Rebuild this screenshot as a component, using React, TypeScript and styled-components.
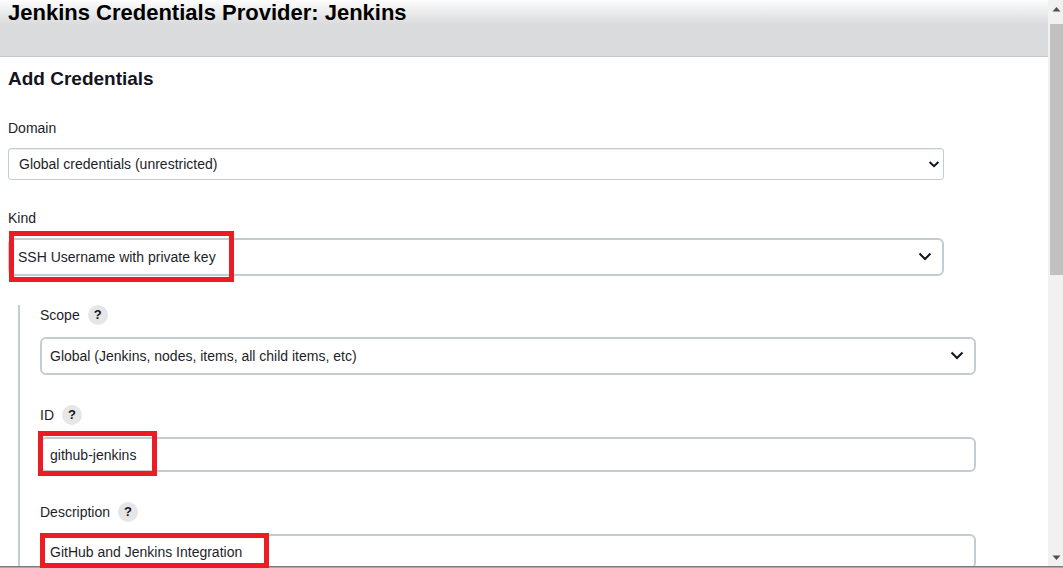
import React from "react";
import styled, { createGlobalStyle } from "styled-components";

const GlobalStyle = createGlobalStyle`
  *, *::before, *::after { box-sizing: border-box; }
  body {
    margin: 0;
    background: #fff;
    color: #1e1e29;
    font: 14px/20px "Liberation Sans", Arial, sans-serif;
  }
`;

const Window = styled.div`
  position: relative;
  display: flex;
  height: 100vh;
  overflow: hidden;
`;

const WindowEdge = styled.div`
  position: absolute;
  inset: auto 0 0;
  z-index: 1;
  height: 2px;
  background: #a8a8a8;
  border-top: 1px solid #7c7c7c;
`;

const Page = styled.main`
  flex: 1;
  min-width: 0;
`;

const Header = styled.header`
  height: 57px;
  padding: 0 8px;
  background: linear-gradient(#fdfdfd, #dadbdd 24px);
  border-bottom: 1px solid #c8c8c8;
`;

const Title = styled.h1`
  margin: 0;
  color: #000;
  font-size: 22px;
  line-height: 26px;
`;

const Form = styled.form`
  padding: 9px 72px 0 8px;
`;

const Heading = styled.h2`
  margin: 0 0 26px;
  color: #14141f;
  font-size: 19px;
  line-height: 26px;
`;

const Fields = styled.div`
  display: flex;
  flex-direction: column;
  gap: 28px;
  margin-right: 32px;
`;

const Group = styled.div`
  display: flex;
  flex-direction: column;
  gap: 30px;
  margin: 29px 0 0 10px;
  padding-left: 20px;
  border-left: 2px solid #c3ccd1;
`;

const Field = styled.div<{ $gap: number }>`
  display: flex;
  flex-direction: column;
  gap: ${(p) => p.$gap}px;
`;

const LabelRow = styled.div`
  display: flex;
  align-items: center;
  gap: 8px;
`;

const Help = styled.button`
  width: 20px;
  height: 20px;
  padding: 0;
  border: 0;
  border-radius: 50%;
  background: #e6e6e6;
  color: #14141f;
  font: bold 13px/20px "Liberation Sans", Arial, sans-serif;
`;

const Control = styled.div`
  position: relative;
  display: flex;
`;

const Select = styled.select<{ $compact?: boolean }>`
  appearance: none;
  width: 100%;
  height: ${(p) => (p.$compact ? 32 : 38)}px;
  padding: 0 32px 0 ${(p) => (p.$compact ? 10 : 8)}px;
  border: ${(p) => (p.$compact ? 1 : 2)}px solid #c3ccd1;
  border-radius: ${(p) => (p.$compact ? 3 : 6)}px;
  box-shadow: ${(p) => (p.$compact ? "inset 0 1px 1px #e9edef" : "none")};
  background: #fff;
  color: inherit;
  font: inherit;
`;

const Input = styled.input`
  width: 100%;
  height: 35px;
  padding: 0 8px;
  border: 2px solid #c3ccd1;
  border-radius: 6px;
  background: #fff;
  color: inherit;
  font: inherit;
`;

const Chevron = styled.svg<{ $compact?: boolean }>`
  position: absolute;
  top: 50%;
  right: ${(p) => (p.$compact ? 4 : 12)}px;
  width: ${(p) => (p.$compact ? 12 : 14)}px;
  height: 10px;
  margin-top: -5px;
  fill: none;
  stroke: #14141f;
  stroke-width: 2;
  pointer-events: none;
`;

const Highlight = styled.span<{ $x: number; $y: number; $w: number; $h: number }>`
  position: absolute;
  z-index: 2;
  left: ${(p) => p.$x}px;
  top: ${(p) => p.$y}px;
  width: ${(p) => p.$w}px;
  height: ${(p) => p.$h}px;
  border: 5px solid #ed1c24;
  pointer-events: none;
`;

const Scrollbar = styled.div`
  display: flex;
  flex-direction: column;
  justify-content: space-between;
  width: 15px;
  padding: 6px 0 7px 2px;
  background: #f1f1f1;
`;

const Arrow = styled.svg`
  width: 13px;
  height: 6px;
  fill: #505050;
`;

const Track = styled.div`
  flex: 1;
  padding: 12px 0;
`;

const Thumb = styled.div`
  height: 48.4%;
  background: #c1c1c1;
`;

function HelpButton({ topic }: { topic: string }) {
  return <Help type="button" aria-label={`Help for ${topic}`}>?</Help>;
}

export default function App() {
  return (
    <>
      <GlobalStyle />
      <Window>
        <Page>
          <Header>
            <Title>Jenkins Credentials Provider: Jenkins</Title>
          </Header>
          <Form>
            <Heading>Add Credentials</Heading>
            <Fields>
              <Field $gap={10}>
                <label htmlFor="domain">Domain</label>
                <Control>
                  <Select id="domain" $compact>
                    <option>Global credentials (unrestricted)</option>
                  </Select>
                  <Chevron $compact viewBox="0 0 12 10"><path d="M1.600 3L6 7.200 10.400 3" /></Chevron>
                </Control>
              </Field>
              <Field $gap={10}>
                <label htmlFor="kind">Kind</label>
                <Control>
                  <Select id="kind">
                    <option>SSH Username with private key</option>
                  </Select>
                  <Chevron viewBox="0 0 14 10"><path d="M1.500 1.500L7 7 12.500 1.500" /></Chevron>
                  <Highlight $x={1} $y={-7} $w={225} $h={51} />
                </Control>
              </Field>
            </Fields>
            <Group>
              <Field $gap={12}>
                <LabelRow>
                  <label htmlFor="scope">Scope</label>
                  <HelpButton topic="Scope" />
                </LabelRow>
                <Control>
                  <Select id="scope">
                    <option>Global (Jenkins, nodes, items, all child items, etc)</option>
                  </Select>
                  <Chevron viewBox="0 0 14 10"><path d="M1.500 1.500L7 7 12.500 1.500" /></Chevron>
                </Control>
              </Field>
              <Field $gap={12}>
                <LabelRow>
                  <label htmlFor="id">ID</label>
                  <HelpButton topic="ID" />
                </LabelRow>
                <Control>
                  <Input id="id" defaultValue="github-jenkins" />
                  <Highlight $x={-2} $y={-6} $w={119} $h={45} />
                </Control>
              </Field>
              <Field $gap={12}>
                <LabelRow>
                  <label htmlFor="description">Description</label>
                  <HelpButton topic="Description" />
                </LabelRow>
                <Control>
                  <Input id="description" defaultValue="GitHub and Jenkins Integration" />
                  <Highlight $x={0} $y={-1} $w={229} $h={35} />
                </Control>
              </Field>
            </Group>
          </Form>
        </Page>
        <Scrollbar aria-hidden="true">
          <Arrow viewBox="0 0 13 6"><path d="M2.500 5.500l4-4.500 4 4.500z" /></Arrow>
          <Track><Thumb /></Track>
          <Arrow viewBox="0 0 13 6"><path d="M2.500 0.500l4 4.500 4-4.500z" /></Arrow>
        </Scrollbar>
        <WindowEdge />
      </Window>
    </>
  );
}
